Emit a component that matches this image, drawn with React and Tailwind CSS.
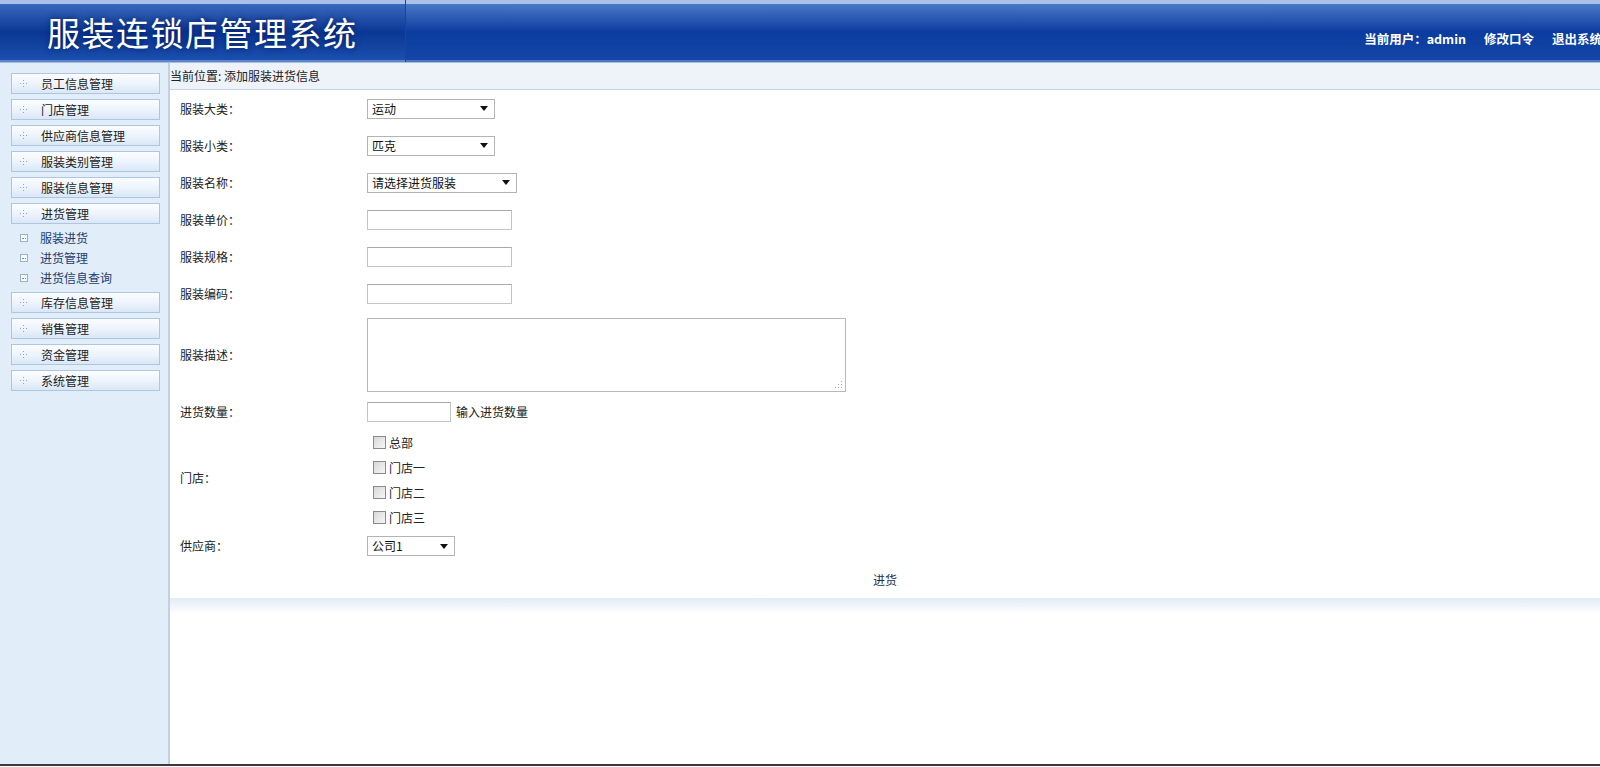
import React from 'react';

const font = { fontFamily: '"Noto Sans CJK SC", "Noto Sans", sans-serif' };

const menus = ['员工信息管理', '门店管理', '供应商信息管理', '服装类别管理', '服装信息管理', '进货管理'];
const menus2 = ['库存信息管理', '销售管理', '资金管理', '系统管理'];
const subs = ['服装进货', '进货管理', '进货信息查询'];

function Dots() {
  return (
    <svg width="7" height="7" viewBox="0 0 7 7" className="shrink-0">
      <rect x="3" y="0" width="1" height="1" fill="#8aa6c6" />
      <rect x="0" y="3" width="1" height="1" fill="#8aa6c6" />
      <rect x="3" y="3" width="1" height="1" fill="#8aa6c6" />
      <rect x="6" y="3" width="1" height="1" fill="#8aa6c6" />
      <rect x="3" y="6" width="1" height="1" fill="#8aa6c6" />
    </svg>
  );
}

function MenuItem({ label }) {
  return (
    <div className="ml-[11px] mr-[8px] h-[21px] flex items-center border border-[#aec6e2] bg-gradient-to-b from-[#fbfdff] via-[#eef4fc] to-[#d9e7f6] text-[12px] text-[#222]">
      <span className="ml-[8px] w-[21px]"><Dots /></span>
      <span>{label}</span>
    </div>
  );
}

function SubItem({ label }) {
  return (
    <div className="h-[20px] flex items-center text-[12px] text-[#1e3d6e]">
      <span className="ml-[20px] w-[8px] h-[8px] border border-[#9fb3c8] bg-[#f4f8fc] flex items-center justify-center">
        <span className="block w-[4px] h-[1px] border-t border-dotted border-[#7a8fa6]" />
      </span>
      <span className="ml-[12px]">{label}</span>
    </div>
  );
}

function Select({ value, w }) {
  return (
    <div className={`${w} h-[20px] flex items-center justify-between border border-[#b4b4b4] bg-white pl-[4px] pr-[6px] text-[12px] text-[#111]`}>
      <span>{value}</span>
      <svg width="8" height="5" viewBox="0 0 8 5"><path d="M0 0h8L4 5z" fill="#111" /></svg>
    </div>
  );
}

function Input({ w }) {
  return <div className={`${w} h-[20px] border border-[#c4c4c4] border-t-[#a8a8a8] bg-white`} />;
}

function Row({ label, children, h = 'h-[37px]' }) {
  return (
    <div className={`flex items-center ${h}`}>
      <div className="w-[197px] pl-[10px] text-[12px] text-[#222]">{label}</div>
      <div className="flex items-center">{children}</div>
    </div>
  );
}

function Check({ label }) {
  return (
    <div className="h-[25px] flex items-center ml-[6px] text-[12px] text-[#222]">
      <span className="w-[13px] h-[13px] border border-[#8a8a8a] bg-gradient-to-br from-[#d8d8d8] to-[#f6f6f6] mr-[3px]" />
      <span>{label}</span>
    </div>
  );
}

export default function App() {
  return (
    <div style={font} className="w-[1600px] h-[767px] overflow-hidden flex flex-col bg-white">
      {/* header */}
      <div className="h-[63px] flex shrink-0 border-b border-[#a9bedc]">
        <div className="w-[406px] h-full flex flex-col border-r border-[#1d4596]">
          <div className="h-[4px] bg-[#a9c0e8]" />
          <div className="flex-1 flex items-center bg-gradient-to-b from-[#3a68bd] via-[#0a3794] to-[#1b4fae] border-b-2 border-[#5f86cc]">
            <span className="ml-[47px] text-[33px] leading-none tracking-[1.5px] text-white [text-shadow:0_0_6px_#001a5c]">服装连锁店管理系统</span>
          </div>
        </div>
        <div className="flex-1 h-full flex flex-col overflow-hidden">
          <div className="h-[4px] bg-[#a9c0e8]" />
          <div className="flex-1 flex items-end justify-end gap-[18px] pb-[11px] -mr-[2px] bg-gradient-to-b from-[#4a77c6] via-[#0b3c9f] to-[#1346a6] border-b-2 border-[#4a76c4] text-[12.5px] font-bold text-white whitespace-nowrap">
            <span>当前用户：admin</span>
            <span>修改口令</span>
            <span>退出系统</span>
          </div>
        </div>
      </div>

      <div className="flex flex-1">
        {/* sidebar */}
        <div className="w-[170px] shrink-0 flex border-r-2 border-[#c6d0dc]">
          <div className="w-[6px] bg-gradient-to-r from-[#bcd3ee] to-[#e0ecf9]" />
          <div className="flex-1 -ml-[6px] pt-[10px] bg-[#e1edf9] flex flex-col">
            <div className="flex flex-col gap-[5px]">
              {menus.map((m) => <MenuItem key={m} label={m} />)}
            </div>
            <div className="py-[4px]">
              {subs.map((s) => <SubItem key={s} label={s} />)}
            </div>
            <div className="flex flex-col gap-[5px]">
              {menus2.map((m) => <MenuItem key={m} label={m} />)}
            </div>
          </div>
        </div>

        {/* main */}
        <div className="flex-1 flex flex-col">
          <div className="h-[27px] flex items-center bg-[#eef3fa] border-b border-[#c3d5ec] text-[12px] text-[#222]">
            当前位置: 添加服装进货信息
          </div>
          <div className="bg-white">
            <Row label="服装大类："><Select value="运动" w="w-[128px]" /></Row>
            <Row label="服装小类："><Select value="匹克" w="w-[128px]" /></Row>
            <Row label="服装名称："><Select value="请选择进货服装" w="w-[150px]" /></Row>
            <Row label="服装单价："><Input w="w-[145px]" /></Row>
            <Row label="服装规格："><Input w="w-[145px]" /></Row>
            <Row label="服装编码："><Input w="w-[145px]" /></Row>
            <Row label="服装描述：" h="h-[86px]">
              <div className="relative w-[479px] h-[74px] border border-[#b8b8b8] bg-white">
                <svg className="absolute right-[2px] bottom-[2px]" width="8" height="8" viewBox="0 0 8 8">
                  <rect x="6" y="0" width="1" height="1" fill="#aaa" />
                  <rect x="3" y="3" width="1" height="1" fill="#aaa" />
                  <rect x="6" y="3" width="1" height="1" fill="#aaa" />
                  <rect x="0" y="6" width="1" height="1" fill="#aaa" />
                  <rect x="3" y="6" width="1" height="1" fill="#aaa" />
                  <rect x="6" y="6" width="1" height="1" fill="#aaa" />
                </svg>
              </div>
            </Row>
            <Row label="进货数量：" h="h-[28px]">
              <Input w="w-[84px]" />
              <span className="ml-[5px] text-[12px] text-[#222]">输入进货数量</span>
            </Row>
            <Row label="门店：" h="h-[104px]">
              <div className="flex flex-col pt-[4px]">
                <Check label="总部" />
                <Check label="门店一" />
                <Check label="门店二" />
                <Check label="门店三" />
              </div>
            </Row>
            <Row label="供应商：" h="h-[32px]"><Select value="公司1" w="w-[88px]" /></Row>
            <div className="h-[36px] flex items-center justify-center text-[12px] text-[#1f2f4a]">进货</div>
          </div>
          <div className="h-[16px] bg-gradient-to-b from-[#e3ebf6] to-white" />
          <div className="flex-1 bg-white" />
        </div>
      </div>
      <div className="h-[2px] bg-[#3a3a3a]" />
      <div className="h-[1px] bg-white" />
    </div>
  );
}
